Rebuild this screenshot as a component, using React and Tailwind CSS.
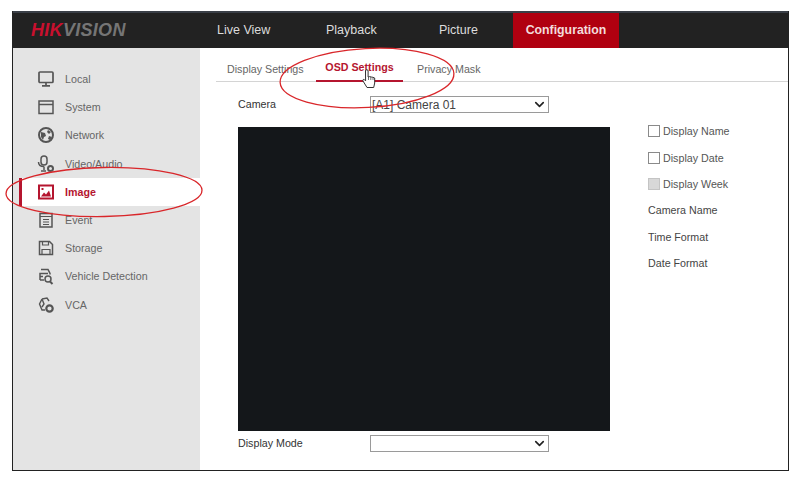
import React from 'react';
import { ChevronDown } from 'lucide-react';

const S = ({ children, active }) => (
    <svg viewBox="0 0 18 18" className="w-[18px] h-[18px]" fill="none" stroke={active ? '#b5152f' : '#555'} strokeWidth="1.5">
        {children}
    </svg>
);

const icons = {
    Local: <S><rect x="2" y="2" width="14" height="10.5" rx="1" strokeWidth="1.7" /><path d="M9 12.5v3M5 15.8h8" strokeWidth="1.7" /></S>,
    System: <S><rect x="2" y="3" width="14" height="12.5" /><path d="M2 6.5h14" /></S>,
    Network: (
        <S>
            <circle cx="9" cy="9" r="7" strokeWidth="2" />
            <path d="M4 6l4 1 1 3-2 1-1 3-2-3zM11 4l3 2-2 2-2-2zM12 10l3 1-2 3-2-1z" fill="#555" stroke="none" />
        </S>
    ),
    'Video/Audio': (
        <S>
            <rect x="4" y="1" width="6" height="9" rx="3" />
            <path d="M1.5 7c0 3 2.5 4.5 5.5 4.5M7 11.5V15M4 16h5" />
            <circle cx="13.5" cy="13.5" r="2.5" strokeWidth="2" />
        </S>
    ),
    Image: (
        <S active>
            <rect x="2" y="2.5" width="14" height="13" strokeWidth="2" />
            <path d="M4 13.5l3-4 2 2 3-4 2 6z" fill="#b5152f" stroke="none" />
            <rect x="4.5" y="5" width="2" height="2" fill="#b5152f" stroke="none" />
        </S>
    ),
    Event: <S><rect x="3" y="2.5" width="12" height="13.5" /><path d="M3 5.5h12M6 8.5h6M6 11h6M6 13.5h6" strokeWidth="1.2" /></S>,
    Storage: <S><path d="M2.5 2.5h10l3 3v10h-13z" /><path d="M5.5 2.5v3.5h6V2.5M5 15.5v-5h8v5" strokeWidth="1.2" /></S>,
    'Vehicle Detection': (
        <S>
            <path d="M4 2.5h7l2 4v1M3 13V6.5h8M3 13h4M3 9.5h3" />
            <circle cx="11" cy="12" r="3" />
            <path d="M13 14.5l2.5 2.5" strokeWidth="2" />
        </S>
    ),
    VCA: (
        <S>
            <path d="M5 3l5-1 2 3M5 3L2.5 8 5 14h3M5 3l2 5-2 3" strokeWidth="1.4" />
            <circle cx="12.5" cy="12.5" r="3.2" strokeWidth="2.2" />
        </S>
    ),
};

const menu = ['Local', 'System', 'Network', 'Video/Audio', 'Image', 'Event', 'Storage', 'Vehicle Detection', 'VCA'];

const SelectBox = ({ value }) => (
    <div className="w-[179px] h-[17px] border border-[#9a9a9a] bg-white flex items-center justify-between pl-[1px] pr-[1px] text-[12px] text-[#444]">
        <span>{value}</span>
        <ChevronDown className="w-[15px] h-[15px] text-[#222]" strokeWidth={2.6} />
    </div>
);

const Option = ({ label, box, disabled }) => (
    <div className={`h-[26.4px] flex items-center gap-[3px] ${box ? 'text-[#555]' : 'text-[#444]'}`}>
        {box && <span className={`w-[12px] h-[12px] border border-[#8a8a8a] mr-[0px] ${disabled ? 'bg-[#d8d8d8] border-[#c4c4c4]' : 'bg-white'}`} />}
        <span>{label}</span>
    </div>
);

export default function App() {
    return (
        <div className="relative w-[800px] h-[482px] bg-white pl-[12px] pt-[11px] overflow-hidden font-['Liberation_Sans',Arial,sans-serif]">
            <div className="w-[777px] h-[460px] border-x border-b border-[#222] flex flex-col">
                {/* top bar */}
                <div className="h-[37px] bg-[#222222] border-t-2 border-[#3a3f47] flex items-stretch text-[12.5px] text-[#dcdcdc]">
                    <div className="w-[192px] pl-[18px] flex items-center text-[18px] italic font-bold tracking-[0.3px]">
                        <span className="text-[#c8102e]">HIK</span>
                        <span className="text-[#757575]">VISION</span>
                    </div>
                    <div className="w-[12px]" />
                    <div className="w-[109px] flex items-center">Live View</div>
                    <div className="w-[113px] flex items-center">Playback</div>
                    <div className="w-[74px] flex items-center">Picture</div>
                    <div className="w-[106px] bg-[#b00010] flex items-center justify-center font-bold text-[12.3px] text-[#f3dcdc]">
                        Configuration
                    </div>
                </div>

                <div className="flex flex-1 min-h-0">
                    {/* sidebar */}
                    <div className="w-[187px] bg-[#e4e4e4] pt-[17px] pl-[6px] text-[10.7px] text-[#666]">
                        {menu.map(item => {
                            const active = item === 'Image';
                            return (
                                <div
                                    key={item}
                                    className={`h-[28.2px] flex items-center pl-[15px] border-l-[3px] ${active ? 'bg-white border-[#b5152f] text-[#b5152f] font-bold' : 'border-transparent'}`}
                                >
                                    <span className="w-[28px]">{icons[item]}</span>
                                    <span>{item}</span>
                                </div>
                            );
                        })}
                    </div>

                    {/* content */}
                    <div className="flex-1 min-w-0 pl-[16px] text-[10.7px]">
                        <div className="h-[34px] border-b border-[#d4d4d4] flex items-end text-[#666]">
                            <div className="w-[100px] pl-[11px] pb-[4px]">Display Settings</div>
                            <div className="w-[87px] h-[34px] pb-[5px] border-b-2 border-[#b5152f] -mb-px flex items-end justify-center font-bold text-[#b5152f]">
                                OSD Settings
                            </div>
                            <div className="pl-[14px] pb-[4px]">Privacy Mask</div>
                        </div>

                        <div className="flex pl-[22px]">
                            <div className="w-[372px]">
                                <div className="h-[45px] pt-[14px] flex items-start">
                                    <span className="w-[132px] text-[#333]">Camera</span>
                                    <SelectBox value="[A1] Camera 01" />
                                </div>
                                <div className="h-[304px] bg-[#14171a]" />
                                <div className="mt-[4px] flex items-center">
                                    <span className="w-[132px] text-[#333]">Display Mode</span>
                                    <SelectBox value="" />
                                </div>
                            </div>
                            <div className="pl-[38px] pt-[36px]">
                                <Option label="Display Name" box />
                                <Option label="Display Date" box />
                                <Option label="Display Week" box disabled />
                                <Option label="Camera Name" />
                                <Option label="Time Format" />
                                <Option label="Date Format" />
                            </div>
                        </div>
                    </div>
                </div>
            </div>

            {/* red annotation ellipses */}
            <svg className="absolute left-0 top-[160px] w-[210px] h-[64px]" viewBox="0 0 210 64" fill="none">
                <ellipse cx="104" cy="32" rx="98" ry="24.5" stroke="#d9262a" strokeWidth="1.3" transform="rotate(-1 104 32)" />
            </svg>
            <svg className="absolute left-[272px] top-[42px] w-[190px] h-[72px]" viewBox="0 0 190 72" fill="none">
                <ellipse cx="95" cy="36" rx="87" ry="29.5" stroke="#d9262a" strokeWidth="1.3" transform="rotate(-3 95 36)" />
            </svg>

            {/* hand cursor */}
            <svg className="absolute left-[362px] top-[69px] w-[15px] h-[20px]" viewBox="0 0 15 20" fill="#fff" stroke="#333" strokeWidth="1">
                <path d="M3.5 2a1.3 1.3 0 0 1 2.6 0v6l1.6-.4 1.6.4 1.6.3 1.8.7V14l-1 4.5H5L1 12c-.7-1.2.7-2.2 1.6-1.2l1 1z" />
                <path d="M6.5 8v3M8.8 8v3M11 8.5V11" strokeWidth=".7" />
            </svg>
        </div>
    );
}
